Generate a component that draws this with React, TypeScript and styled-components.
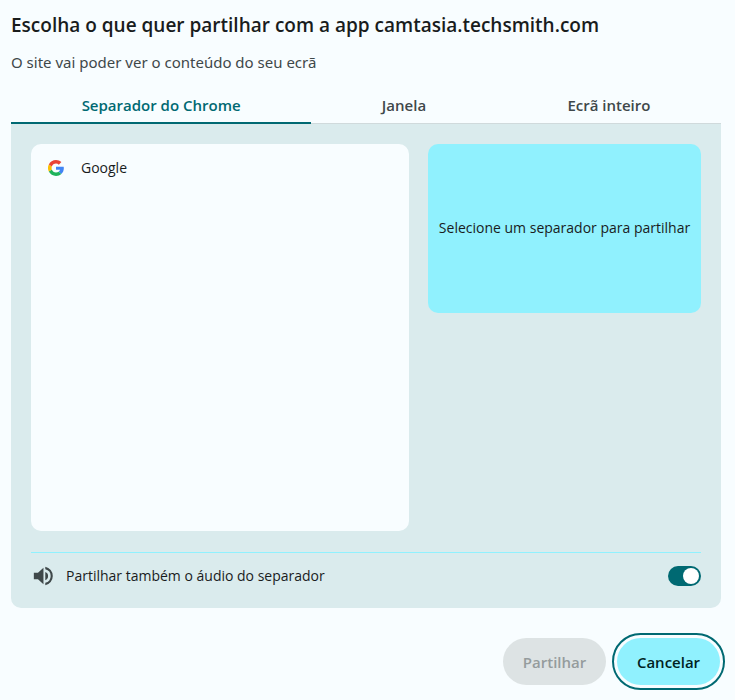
import React, { useState } from "react";
import styled, { createGlobalStyle } from "styled-components";

const GlobalStyle = createGlobalStyle`
  *, *::before, *::after { box-sizing: border-box; }
  body {
    margin: 0;
    background: #f8fdff;
    color: #191c1d;
    font-family: "Segoe UI", "Open Sans", "Noto Sans", sans-serif;
    font-size: 14px;
    line-height: 20px;
  }
  button, input { font: inherit; }
`;

const Dialog = styled.main`
  display: flex;
  flex-direction: column;
  padding: 10px 14px 0 11px;
`;

const Title = styled.h1`
  margin: 0;
  font-size: 19px;
  font-weight: 600;
  line-height: 30px;
`;

const Subtitle = styled.p`
  margin: 12px 0 0;
  color: #3f484a;
  font-family: "Segoe UI", "Noto Sans", sans-serif;
  font-size: 15px;
`;

const TabList = styled.div`
  display: flex;
  margin-top: 16px;
  box-shadow: inset 0 -1px 0 #d0dadc;
`;

const Tab = styled.button<{ $active: boolean }>`
  flex: 1 1 auto;
  height: 36px;
  padding: 0;
  border: 0;
  border-bottom: 2px solid ${(p) => (p.$active ? "#006972" : "transparent")};
  background: none;
  color: ${(p) => (p.$active ? "#006972" : "#3f484a")};
  font-size: 15px;
  font-weight: 600;
  cursor: pointer;
`;

const Panel = styled.section`
  padding: 20px 20px 0;
  border-radius: 0 0 10px 10px;
  background: #daebed;
`;

const Sources = styled.div`
  display: grid;
  grid-template-columns: 378fr 273fr;
  gap: 19px;
  align-items: start;
`;

const SourceList = styled.ul`
  min-height: 387px;
  margin: 0;
  padding: 4px 0;
  border-radius: 10px;
  background: #f8fdff;
  list-style: none;
`;

const SourceButton = styled.button`
  display: flex;
  align-items: center;
  gap: 17px;
  width: 100%;
  height: 40px;
  padding: 0 17px;
  border: 0;
  background: none;
  color: inherit;
  text-align: left;
`;

const Preview = styled.div`
  display: flex;
  align-items: center;
  justify-content: center;
  min-height: 169px;
  padding-bottom: 2px;
  border-radius: 10px;
  background: #90f1fe;
  text-align: center;
`;

const AudioRow = styled.label`
  display: flex;
  align-items: center;
  gap: 12px;
  height: 56px;
  margin-top: 21px;
  padding: 0 0 9px 1px;
  border-top: 1px solid #90f1fe;
`;

const AudioText = styled.span`
  flex: 1;
`;

const Switch = styled.input`
  display: flex;
  align-items: center;
  width: 33px;
  height: 20px;
  margin: 0;
  padding: 0 2px;
  appearance: none;
  border-radius: 10px;
  background: #6f797a;

  &::before {
    content: "";
    width: 16px;
    height: 16px;
    border-radius: 50%;
    background: #fff;
  }

  &:checked {
    justify-content: flex-end;
    background: #006972;
  }
`;

const Actions = styled.footer`
  display: flex;
  justify-content: flex-end;
  gap: 11px;
  padding: 30px 1px 15px 0;
`;

const ActionButton = styled.button<{ $focused?: boolean }>`
  min-width: 103px;
  height: 47px;
  padding: 0 16px;
  border: 0;
  border-radius: 24px;
  background: #90f1fe;
  color: #001f23;
  font-size: 15px;
  font-weight: 600;
  outline: ${(p) => (p.$focused ? "2px solid #006972" : "none")};
  outline-offset: 3px;

  &:disabled {
    background: #dde3e4;
    color: #959c9d;
  }
`;

function GoogleIcon() {
  return (
    <svg width="16" height="16" viewBox="0 0 48 48" aria-hidden="true">
      <path fill="#4285F4" d="M47 20H24v9.500h12.300c-.8 2.200-2.300 4.100-4.400 5.500l8 7C45 37.500 47.500 31 47.500 24.500c0-1.600-.2-3.100-.5-4.500z" />
      <path fill="#1eb35b" d="M24 48c6.500 0 12-2.200 16-6l-8-7c-2.200 1.500-4.900 2.300-8 2.300-5.800 0-10.700-3.700-12.500-9l-9 6.500C6.500 42.600 14.600 48 24 48z" />
      <path fill="#FBC005" d="M11.500 28.300a13.200 13.200 0 0 1 0-8.600l-9-6.500a24 24 0 0 0 0 21.600z" />
      <path fill="#EA4335" d="M24 10.700c3.300 0 6.200 1.100 8.500 3.300l7.600-7.800C35.900 2.400 30.500 0 24 0 14.600 0 6.500 5.400 2.500 13.200l9 6.500c1.800-5.300 6.700-9 12.500-9z" />
    </svg>
  );
}

function VolumeIcon() {
  return (
    <svg width="22" height="22" viewBox="0 0 24 24" fill="#3f484a" aria-hidden="true">
      <path d="M2 8.500v7h4.500l6 5.500V3l-6 5.500zM17.500 12A4.500 4.500 0 0 0 14.500 7.500v9A4.500 4.500 0 0 0 17.500 12zM14.500 2v2.600a7.600 7.600 0 0 1 0 14.800V22a10.200 10.200 0 0 0 0-20z" />
    </svg>
  );
}

const tabs = ["Separador do Chrome", "Janela", "Ecrã inteiro"];

export default function App() {
  const [active, setActive] = useState(0);
  const [audio, setAudio] = useState(true);

  return (
    <>
      <GlobalStyle />
      <Dialog>
        <Title>Escolha o que quer partilhar com a app camtasia.techsmith.com</Title>
        <Subtitle>O site vai poder ver o conteúdo do seu ecrã</Subtitle>
        <TabList role="tablist">
          {tabs.map((name, i) => (
            <Tab
              key={name}
              id={`tab-${i}`}
              type="button"
              role="tab"
              aria-selected={i === active}
              aria-controls="sources"
              $active={i === active}
              onClick={() => setActive(i)}
            >
              {name}
            </Tab>
          ))}
        </TabList>
        <Panel id="sources" role="tabpanel" aria-labelledby={`tab-${active}`}>
          <Sources>
            <SourceList>
              <li>
                <SourceButton type="button">
                  <GoogleIcon />
                  Google
                </SourceButton>
              </li>
            </SourceList>
            <Preview>Selecione um separador para partilhar</Preview>
          </Sources>
          <AudioRow htmlFor="audio">
            <VolumeIcon />
            <AudioText>Partilhar também o áudio do separador</AudioText>
            <Switch
              id="audio"
              type="checkbox"
              role="switch"
              checked={audio}
              onChange={(e) => setAudio(e.target.checked)}
            />
          </AudioRow>
        </Panel>
        <Actions>
          <ActionButton type="button" disabled>
            Partilhar
          </ActionButton>
          <ActionButton type="button" $focused>
            Cancelar
          </ActionButton>
        </Actions>
      </Dialog>
    </>
  );
}
